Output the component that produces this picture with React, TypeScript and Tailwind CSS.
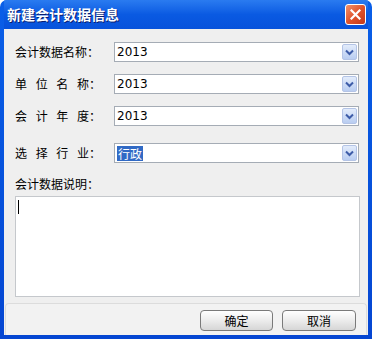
import React from "react";

const cjk = "font-['SimSun','Noto_Sans_CJK_SC',sans-serif]";

function ComboArrow() {
  return (
    <div className="w-[15px] h-[16px] rounded-[2px] border border-[#b4c4e6] bg-gradient-to-b from-[#e3ecfb] to-[#b9cdf1] flex items-center justify-center">
      <svg width="9" height="7" viewBox="0 0 9 7">
        <path d="M1 1.5l3.5 3.5L8 1.5" stroke="#3d5ca8" strokeWidth="2" fill="none" />
      </svg>
    </div>
  );
}

function Combo({ value, selected }: { value: string; selected?: boolean }) {
  return (
    <div className="flex-1 h-[20px] bg-white border border-[#a5acb5] flex items-center justify-between pl-[2px] pr-[1px]">
      {selected ? (
        <span className={`${cjk} text-[12px] leading-[15px] bg-[#316ac5] text-white px-[1px]`}>{value}</span>
      ) : (
        <span className="font-['DejaVu_Sans',sans-serif] text-[12px] text-black leading-none">{value}</span>
      )}
      <ComboArrow />
    </div>
  );
}

function Row({ label, value, selected, className }: { label: React.ReactNode; value: string; selected?: boolean; className?: string }) {
  return (
    <div className={`flex items-center ${className ?? ""}`}>
      <div className={`w-[99px] shrink-0 ${cjk} text-[12px] text-black`}>{label}</div>
      <Combo value={value} selected={selected} />
    </div>
  );
}

function Spread({ chars }: { chars: string[] }) {
  return (
    <div className="flex w-[86px] justify-between">
      {chars.map((c, i) => (
        <span key={i}>{c}</span>
      ))}
    </div>
  );
}

export default function App() {
  return (
    <div className="w-[372px] h-[339px] bg-gradient-to-b from-[#0a5fe8] to-[#0546d2] rounded-t-[7px] flex flex-col px-[4px] pb-[4px] overflow-hidden">
      {/* Title bar */}
      <div className="h-[29px] shrink-0 flex items-center justify-between pl-[3px] pr-[2px] bg-gradient-to-b from-[#2a7bf0] via-[#0a5ae2] to-[#0752db]">
        <span className={`${cjk} text-[14px] font-bold text-white [text-shadow:1px_1px_0_#0a1e70]`}>新建会计数据信息</span>
        <div className="w-[21px] h-[21px] rounded-[3px] border border-white bg-gradient-to-br from-[#f0916b] via-[#e0532c] to-[#c2381a] flex items-center justify-center">
          <svg width="11" height="11" viewBox="0 0 11 11">
            <path d="M1.5 1.5l8 8M9.5 1.5l-8 8" stroke="white" strokeWidth="2.2" strokeLinecap="square" />
          </svg>
        </div>
      </div>

      {/* Client area */}
      <div className="flex-1 bg-[#efefef] flex flex-col">
        <div className="flex flex-col pl-[11px] pr-[9px] pt-[13px]">
          <Row label="会计数据名称：" value="2013" />
          <Row className="mt-[12px]" label={<Spread chars={["单", "位", "名", "称："]} />} value="2013" />
          <Row className="mt-[12px]" label={<Spread chars={["会", "计", "年", "度："]} />} value="2013" />
          <Row className="mt-[17px]" label={<Spread chars={["选", "择", "行", "业："]} />} value="行政" selected />
        </div>

        <div className={`pl-[11px] mt-[14px] ${cjk} text-[12px] text-black leading-[14px]`}>会计数据说明：</div>

        <div className="ml-[11px] mr-[8px] mt-[5px] h-[101px] bg-white border border-[#c5c8cc] pl-[2px] pt-[3px]">
          <div className="w-[1px] h-[14px] bg-black" />
        </div>

        {/* Footer */}
        <div className="mt-auto mx-[1px] h-[32px] rounded-t-[4px] border border-b-0 border-[#dcdcdc] bg-[#f2f2f2] flex items-center justify-end gap-[9px] pr-[10px] pt-[2px]">
          <button className={`w-[73px] h-[21px] rounded-[4px] border border-[#7a7a7a] bg-gradient-to-b from-white via-[#ececec] to-[#d6d6d6] ${cjk} text-[12px] text-black`}>确定</button>
          <button className={`w-[74px] h-[21px] rounded-[4px] border border-[#7a7a7a] bg-gradient-to-b from-white via-[#ececec] to-[#d6d6d6] ${cjk} text-[12px] text-black`}>取消</button>
        </div>
      </div>
    </div>
  );
}
